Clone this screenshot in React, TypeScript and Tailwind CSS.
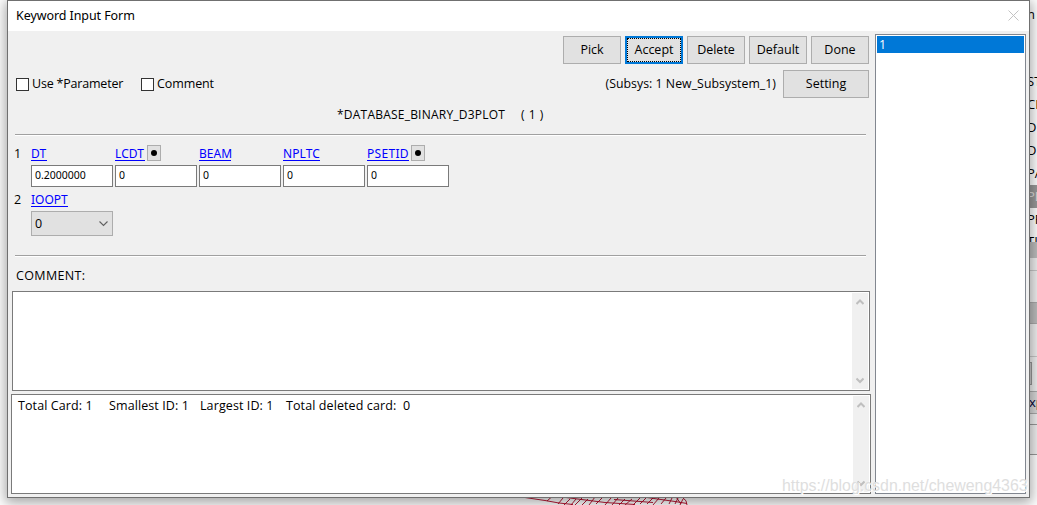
import { clsx } from "clsx";

interface Field {
  label: string;
  value: string;
  picker?: boolean;
  labelClass: string;
}

const FIELDS: Field[] = [
  { label: "DT", value: "0.2000000", labelClass: "w-[16px]" },
  { label: "LCDT", value: "0", picker: true, labelClass: "w-[30px] tracking-[0.1px]" },
  { label: "BEAM", value: "0", labelClass: "w-[32px]" },
  { label: "NPLTC", value: "0", labelClass: "w-[37px] tracking-[0.1px]" },
  { label: "PSETID", value: "0", picker: true, labelClass: "w-[42px] tracking-[0.3px]" },
];

const TREE_ROWS = ["ST", "CI", "DE", "DE", "PA", "PL", "PR"];

function PushButton({ label, wide, focused }: { label: string; wide?: boolean; focused?: boolean }) {
  return (
    <button
      className={clsx(
        "h-7 shrink-0 bg-[#e1e1e1] text-center",
        wide ? "w-[86px]" : "w-[58px]",
        focused ? "border-2 border-[#0078d7]" : "border border-[#adadad]"
      )}
    >
      <span className={clsx("flex h-full items-center justify-center pb-px", focused && "border border-dotted border-black")}>
        {label}
      </span>
    </button>
  );
}

function CheckOption({ label, labelClass }: { label: string; labelClass: string }) {
  return (
    <label className="flex items-center gap-[3px]">
      <span className="size-[13px] border border-[#333] bg-white" />
      <span className={clsx("whitespace-nowrap", labelClass)}>{label}</span>
    </label>
  );
}

function Divider() {
  return <div className="ml-[7px] h-[2px] w-[851px] shrink-0 border-t border-b border-t-[#a0a0a0] border-b-white" />;
}

function FieldLabel({ label, className }: { label: string; className: string }) {
  return (
    <a className={clsx("block h-[14px] border-b border-[#0000ff] font-['Noto_Sans',sans-serif] text-[12px] leading-[14px] whitespace-nowrap text-[#0000ff]", className)}>
      {label}
    </a>
  );
}

function ScrollBar() {
  return (
    <div className="flex w-4 shrink-0 flex-col items-center justify-between bg-[#f0f0f0] pt-[6px] pb-[5px]">
      <svg width="8" height="7" viewBox="0 0 8 7" fill="none" className="mr-px">
        <path d="M0.5 5L4 1.5L7.5 5" stroke="#bfbfbf" strokeWidth="2" />
      </svg>
      <svg width="8" height="7" viewBox="0 0 8 7" fill="none" className="mr-px">
        <path d="M0.5 1.5L4 5L7.5 1.5" stroke="#bfbfbf" strokeWidth="2" />
      </svg>
    </div>
  );
}

// The part of the parent window that shows to the right of the dialog.
function ParentEdge() {
  return (
    <div className="ml-auto flex h-full w-[10px] flex-col overflow-hidden bg-[#f0f0f0] text-[13px]">
      <div className="flex h-[27px] shrink-0 items-center justify-end bg-white pr-0.5">n</div>
      <div className="h-[43px] shrink-0 bg-white" />
      {TREE_ROWS.map((row, i) => (
        <div key={i} className={clsx("flex h-[23px] shrink-0 items-center pb-px", row === "PL" ? "bg-[#999] text-[#ddd]" : "bg-white")}>
          {row}
        </div>
      ))}
      <div className="h-[11px] shrink-0 overflow-hidden bg-white leading-[20px]">TI</div>
      <div className="h-4 shrink-0 bg-[#bdbdbd]" />
      <div className="h-[13px] shrink-0 border-b border-[#c8c8c8]" />
      <div className="h-[31px] shrink-0" />
      <div className="h-[22px] shrink-0 border-y border-[#aaa] bg-[#bdbdbd]" />
      <div className="h-[33px] shrink-0 border-b border-[#c8c8c8]" />
      <div className="h-[5px] shrink-0" />
      <div className="h-[23px] w-[5px] shrink-0 border border-[#999] bg-[#ccc]" />
      <div className="h-[6px] shrink-0" />
      <div className="flex h-[23px] shrink-0 items-center border-y border-[#aaa] bg-[#d8d8d8] pb-px pl-[2px] text-[#003]">xp</div>
      <div className="h-[11px] shrink-0 border-b border-[#999]" />
      <div className="h-[30px] shrink-0 border-b border-[#999]" />
      <div className="grow bg-white" />
    </div>
  );
}

// Corner of the element mesh visible below the dialog.
function MeshCorner() {
  return (
    <svg className="absolute top-[497px] left-[525px]" width="164" height="8" viewBox="0 0 164 8" fill="none" stroke="#b00020" strokeWidth="0.9">
      <path d="M0 0.5L20 3.5L34 6L48 7.5M41 0.5L80 5.5L110 7.5M89 2.5L128 5.5M122 0.5L150 4.5L162 6.5" />
      <path d="M26 0.5L22 4M38 1L33 7M45 2L39 8M51 2L46 8M57 1L50 8M63 2L57 8M70 0L64 8M78 0L71 7M86 1L80 8M93 1L87 8M100 2L94 8M107 2L100 8M115 1L108 8M122 0L115 7M129 0L122 7M134 1L128 8M141 1L136 7M147 1L144 7M153 1L150 7M158 2L155 8M151 0L156 7M158 1Q162 3 162 8" />
    </svg>
  );
}

export default function App() {
  return (
    <div className="relative h-[505px] w-[1037px] overflow-hidden bg-white font-['Open_Sans',sans-serif] text-[13px] leading-4 text-black">
      <ParentEdge />
      <MeshCorner />

      {/* dialog window */}
      <div className="absolute top-0 left-[7px] flex h-[498px] w-[1023px] flex-col border border-[#707070] bg-[#f0f0f0] shadow-[0_3px_12px_2px_rgba(0,0,0,0.35)]">
        <div className="flex h-[30px] shrink-0 items-center justify-between bg-white pr-[10px] pl-2">
          <span className="font-['Noto_Sans',sans-serif] text-[12.5px] tracking-[-0.08px]">Keyword Input Form</span>
          <svg width="11" height="11" viewBox="0 0 11 11" fill="none" className="-translate-y-px">
            <path d="M0.5 0.5L10.5 10.5M10.5 0.5L0.5 10.5" stroke="#c3c3c3" />
          </svg>
        </div>

        <div className="flex min-h-0 grow">
          <div className="flex w-[863px] shrink-0 flex-col">
            <div className="mt-[5px] flex justify-end gap-1 pr-[2px] text-[12.5px]">
              <PushButton label="Pick" />
              <PushButton label="Accept" focused />
              <PushButton label="Delete" />
              <PushButton label="Default" />
              <PushButton label="Done" />
            </div>

            <div className="mt-1.5 flex h-7 items-center pr-[2px] pl-2 text-[12.5px]">
              <div className="flex">
                <CheckOption label="Use *Parameter" labelClass="w-[109px] tracking-[-0.2px]" />
                <CheckOption label="Comment" labelClass="tracking-[-0.1px]" />
              </div>
              <span className="mr-[7px] ml-auto text-[12.3px] tracking-[0.04px]">(Subsys: 1 New_Subsystem_1)</span>
              <PushButton label="Setting" wide />
            </div>

            <div className="flex h-9 shrink-0 items-center gap-4 pb-[3px] pl-[329px] text-[12px]">
              <span className="w-[168px] tracking-[0.22px] whitespace-nowrap">*DATABASE_BINARY_D3PLOT</span>
              <span className="tracking-[0.5px]">( 1 )</span>
            </div>
            <Divider />

            <div className="mt-[6px] flex pl-[6px]">
              <span className="w-[17px] pt-[4px] text-[12.5px]">1</span>
              <div className="flex gap-0.5">
                {FIELDS.map((f) => (
                  <div key={f.label} className="w-[82px]">
                    <div className="flex h-[23px] items-start gap-[2px] pt-[3px]">
                      <div className="pt-[2px]">
                        <FieldLabel label={f.label} className={f.labelClass} />
                      </div>
                      {f.picker && (
                        <button className="flex h-4 w-[14px] items-center justify-center border border-[#adadad] bg-[#e1e1e1]">
                          <span className="size-1.5 rounded-full bg-black" />
                        </button>
                      )}
                    </div>
                    <div className="flex h-[22px] items-center border border-[#7a7a7a] bg-white pb-[2px] pl-[3px] font-['Noto_Sans',sans-serif] text-[10.5px]">
                      {f.value}
                    </div>
                  </div>
                ))}
              </div>
            </div>

            <div className="flex pl-[6px]">
              <span className="w-[17px] pt-[5px] text-[12.5px]">2</span>
              <div className="w-[82px]">
                <div className="h-6 pt-[6px]">
                  <FieldLabel label="IOOPT" className="w-[37px]" />
                </div>
                <div className="flex h-[25px] items-center justify-between border border-[#adadad] bg-[#e1e1e1] pr-[4px] pl-[3px] text-[12.5px]">
                  <span>0</span>
                  <svg width="9" height="6" viewBox="0 0 9 6" fill="none">
                    <path d="M0.5 0.5L4.5 4.5L8.5 0.5" stroke="#606060" strokeWidth="1.1" />
                  </svg>
                </div>
              </div>
            </div>

            <div className="h-[19px] shrink-0" />
            <Divider />

            <div className="flex h-[34px] shrink-0 items-center pt-[4px] pl-2 text-[12.5px] tracking-[0.35px]">COMMENT:</div>
            <div className="ml-1 flex h-[100px] w-[858px] shrink-0 border border-[#7a7a7a] bg-white p-px">
              <div className="grow" />
              <ScrollBar />
            </div>

            <div className="mt-[3px] ml-[3px] flex h-[100px] w-[860px] shrink-0 border border-[#7a7a7a] bg-white p-px">
              <div className="flex grow pt-[2px] pl-[5px] text-[12.5px] tracking-[0.1px] whitespace-pre">
                <span className="w-[91px]">Total Card: 1</span>
                <span className="w-[91px]">Smallest ID: 1</span>
                <span className="w-[86px]">Largest ID: 1</span>
                <span>Total deleted card:  0</span>
              </div>
              <ScrollBar />
            </div>
          </div>

          <div className="mt-[3px] ml-1 h-[460px] w-[151px] border border-[#828790] bg-white p-px">
            <div className="flex h-[17px] items-center bg-[#0078d7] pl-[2px] text-[12.5px] text-white">1</div>
          </div>
        </div>
      </div>

      <div className="absolute top-[476px] left-[782px] font-['Liberation_Sans',sans-serif] text-[15.9px] leading-5 whitespace-nowrap text-[#dedede] [text-shadow:1px_1px_0_#fff]">
        https://blog.csdn.net/cheweng4363
      </div>
    </div>
  );
}
